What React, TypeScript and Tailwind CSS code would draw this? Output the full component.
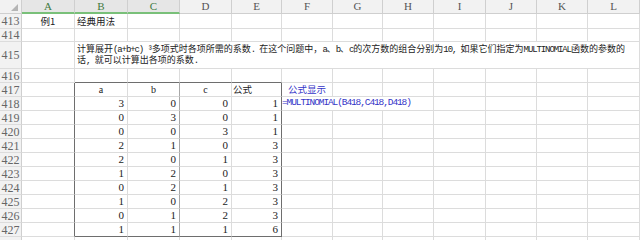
import React from "react";

const letters = ["A", "B", "C", "D", "E", "F", "G", "H", "I", "J", "K", "L"];
const rowNums = [413, 414, 415, 416, 417, 418, 419, 420, 421, 422, 423, 424, 425, 426, 427, 428];
const data: number[][] = [
  [3, 0, 0, 1],
  [0, 3, 0, 1],
  [0, 0, 3, 1],
  [2, 1, 0, 3],
  [2, 0, 1, 3],
  [1, 2, 0, 3],
  [0, 2, 1, 3],
  [1, 0, 2, 3],
  [0, 1, 2, 3],
  [1, 1, 1, 6],
];

const cjk = "font-['Noto_Sans_CJK_SC',sans-serif]";
const num = "font-['Liberation_Serif',serif]";

function A({ t }: { t: string }) {
  return <span className="font-['Liberation_Mono',monospace] tracking-[-1.1px]">{t}</span>;
}

export default function App() {
  const cells: React.ReactNode[] = [];
  cells.push(
    <div key="corner" className="relative bg-[#f2f2f2] border-r border-b border-[#cfcfcf]">
      <svg className="absolute right-[3px] bottom-[2px]" width="7" height="7" viewBox="0 0 7 7">
        <polygon points="7,0 7,7 0,7" fill="#b5b5b5" />
      </svg>
    </div>
  );
  letters.forEach((l, i) => {
    const sel = i < 3;
    cells.push(
      <div
        key={"h" + l}
        className={
          sel
            ? `flex items-center justify-center bg-[#e6e6e6] border-r border-r-[#cfcfcf] border-b-2 border-b-[#79c079] text-[11px] text-[#3f7a3f] ${num}`
            : `flex items-center justify-center bg-[#f2f2f2] border-r border-b border-[#cfcfcf] text-[11px] text-[#555] ${num}`
        }
      >
        {l}
      </div>
    );
  });

  rowNums.forEach((rn, ri) => {
    cells.push(
      <div
        key={"r" + rn}
        className={`flex items-center justify-center bg-[#f2f2f2] border-r border-b border-r-[#cfcfcf] border-b-[#dcdcdc] text-[12px] text-[#666] ${num}`}
      >
        {rn === 428 ? null : rn}
      </div>
    );
    for (let c = 1; c <= 12; c++) {
      const inTable = ri >= 4 && ri <= 14;
      if (ri === 2 && c >= 3) continue;
      if (ri === 5 && (c === 7 || c === 8)) continue;

      let rightCls = "border-r-[#dcdcdc]";
      let bottomCls = "border-b-[#dcdcdc]";
      if (inTable && (c === 1 || c === 5)) rightCls = "border-r-[#6e6e6e]";
      if (inTable && c === 3) rightCls = "border-r-[#a8a8a8]";
      if ((ri === 3 || ri === 14) && c >= 2 && c <= 5) bottomCls = "border-b-[#6e6e6e]";

      let content: React.ReactNode = null;
      let extra = "";
      if (ri === 0 && c === 1) {
        content = <span className={`${cjk} text-[9.5px] text-[#222]`}>例1</span>;
        extra = "flex items-center justify-center";
      } else if (ri === 0 && c === 2) {
        content = <span className={`${cjk} text-[9.5px] text-[#222]`}>经典用法</span>;
        extra = "flex items-center pl-[2px]";
      } else if (ri === 2 && c === 2) {
        extra = "col-span-11 flex items-center pl-[2px]";
        content = (
          <div className={`${cjk} text-[9px] leading-[9.5px] text-[#222] whitespace-nowrap`}>
            计算展开<A t="(a+b+c) ³" />多项式时各项所需的系数<A t=". " />在这个问题中，<A t="a" />、<A t="b" />、<A t="c" />的次方数的组合分别为<A t="10, " />如果它们指定为<A t="MULTINOMIAL" />函数的参数的
            <br />
            话<A t=", " />就可以计算出各项的系数<A t="." />
          </div>
        );
      } else if (ri === 4 && c >= 2 && c <= 4) {
        content = <span className={`${num} text-[10px] text-[#222]`}>{["a", "b", "c"][c - 2]}</span>;
        extra = "flex items-center justify-center";
      } else if (ri === 4 && c === 5) {
        content = <span className={`${cjk} text-[9.5px] text-[#222]`}>公式</span>;
        extra = "flex items-center pl-[1px]";
      } else if (ri === 4 && c === 6) {
        content = <span className={`${cjk} text-[9.5px] text-[#3535c8]`}>公式显示</span>;
        extra = "flex items-center justify-center";
      } else if (ri >= 5 && ri <= 14 && c >= 2 && c <= 5) {
        content = <span className={`${num} text-[11px] text-[#222]`}>{data[ri - 5][c - 2]}</span>;
        extra = "flex items-center justify-end pr-[3px]";
      } else if (ri === 5 && c === 6) {
        extra = "col-span-3 flex items-center";
        content = (
          <span className="font-['Liberation_Mono',monospace] text-[9.5px] tracking-[-1.1px] text-[#3535c8] whitespace-nowrap">
            =MULTINOMIAL(B418,C418,D418)
          </span>
        );
      }
      cells.push(
        <div key={`c${ri}-${c}`} className={`bg-white border-r border-b ${rightCls} ${bottomCls} overflow-hidden ${extra}`}>
          {content}
        </div>
      );
    }
  });

  return (
    <div className="w-[640px] h-[240px] overflow-hidden bg-white">
      <div className="grid grid-cols-[22px_53px_53px_52px_52px_50px_51px_50px_51px_52px_51px_51px_52px] grid-rows-[14px_15px_13px_27px_14px_14px_14px_14px_14px_14px_14px_14px_14px_14px_14px_14px_14px]">
        {cells}
      </div>
    </div>
  );
}
